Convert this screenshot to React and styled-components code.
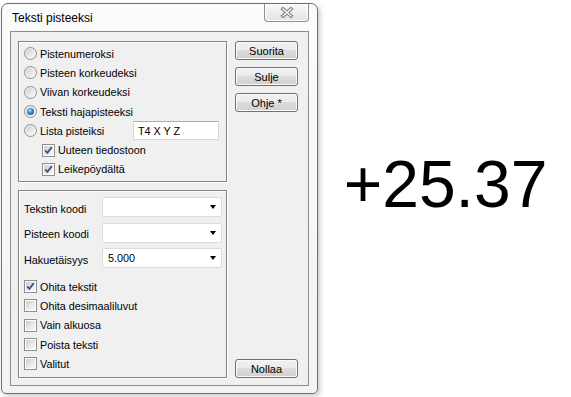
import React from 'react';
import styled, { createGlobalStyle } from 'styled-components';

const GlobalStyle = createGlobalStyle`
    html, body {
        margin: 0;
        padding: 0;
        background: #ffffff;
    }
    * {
        box-sizing: border-box;
    }
`;

const Page = styled.div`
    display: flex;
    align-items: flex-start;
    width: 571px;
    height: 397px;
    font-family: "Liberation Sans", Arial, sans-serif;
    color: #000;
`;

const Window = styled.div`
    margin: 3px 0 0 1px;
    width: 317px;
    height: 391px;
    display: flex;
    flex-direction: column;
    padding: 0 8px 7px;
    border: 1px solid #6f6f6f;
    border-radius: 7px 7px 5px 5px;
    background: linear-gradient(180deg, #fbfbfb 0%, #f3f3f3 100%);
    box-shadow: 2px 2px 5px rgba(0, 0, 0, 0.22);
`;

const TitleBar = styled.div`
    height: 27px;
    display: flex;
    align-items: center;
    justify-content: space-between;
`;

const Title = styled.span`
    padding-left: 2px;
    font-size: 12px;
`;

const CloseButton = styled.div`
    align-self: flex-start;
    width: 45px;
    height: 18px;
    display: flex;
    align-items: center;
    justify-content: center;
    border: 1px solid #8f8f8f;
    border-top: none;
    border-radius: 0 0 4px 4px;
    background: linear-gradient(180deg, #f7f7f7 0%, #eeeeee 50%, #e3e3e3 100%);
    box-shadow: inset 0 0 0 1px #ffffff;
`;

const Client = styled.div`
    flex: 1;
    display: flex;
    gap: 8px;
    padding: 9px 10px 7px 7px;
    border: 1px solid #8d8d8d;
    background: #f0f0f0;
    font-size: 10.8px;
`;

const LeftColumn = styled.div`
    width: 209px;
    display: flex;
    flex-direction: column;
    gap: 8px;
`;

const GroupBox = styled.div`
    flex: ${p => (p.$height ? 'none' : '1')};
    height: ${p => (p.$height ? `${p.$height}px` : 'auto')};
    display: flex;
    flex-direction: column;
    padding: ${p => p.$padding};
    border: 1px solid #858585;
    box-shadow: inset 1px 1px 0 #ffffff, 1px 1px 0 #ffffff;
`;

const OptionRow = styled.div`
    height: 19.3px;
    display: flex;
    align-items: center;
    gap: 3px;
    padding-left: ${p => p.$indent || 5}px;
`;

const Radio = styled.span`
    position: relative;
    flex: none;
    width: 13px;
    height: 13px;
    border-radius: 50%;
    border: 1px solid #8e8f8f;
    background: linear-gradient(135deg, #c9c9c9 0%, #e6e6e6 50%, #fbfbfb 100%);
    box-shadow: inset 0 0 0 1px #f4f4f4;

    &::after {
        content: '';
        display: ${p => (p.$checked ? 'block' : 'none')};
        position: absolute;
        left: 2px;
        top: 2px;
        width: 7px;
        height: 7px;
        border-radius: 50%;
        background: radial-gradient(circle at 40% 35%, #a9e2fb 0%, #2c86c9 45%, #103e6f 100%);
    }
`;

const Check = styled.span`
    position: relative;
    flex: none;
    width: 13px;
    height: 13px;
    border: 1px solid #8e8f8f;
    background: #ffffff;

    &::before {
        content: '';
        position: absolute;
        inset: 1px;
        background: linear-gradient(135deg, #cdcdcd 0%, #e9e9e9 55%, #f9f9f9 100%);
    }

    svg {
        position: absolute;
        left: 0;
        top: 0;
    }
`;

const TextField = styled.div`
    margin-left: auto;
    margin-right: 7px;
    width: 86px;
    height: 19px;
    display: flex;
    align-items: center;
    padding-left: 4px;
    border: 1px solid #d4d6da;
    border-top-color: #abadb3;
    background: #ffffff;
`;

const FieldList = styled.div`
    display: flex;
    flex-direction: column;
    gap: 5.5px;
    padding-left: 5px;
`;

const FieldRow = styled.div`
    height: 20px;
    display: flex;
    align-items: center;
`;

const FieldLabel = styled.span`
    width: 78px;
    padding-top: 3px;
`;

const Combo = styled.div`
    width: 120px;
    height: 20px;
    display: flex;
    align-items: center;
    justify-content: space-between;
    padding: 0 5px 0 5px;
    border: 1px solid #dcdcdc;
    border-radius: 2px;
    background: #ffffff;
`;

const Arrow = styled.span`
    width: 0;
    height: 0;
    border-left: 3.5px solid transparent;
    border-right: 3.5px solid transparent;
    border-top: 4px solid #000;
`;

const CheckList = styled.div`
    margin-top: 9px;
    display: flex;
    flex-direction: column;
`;

const ButtonColumn = styled.div`
    width: 63px;
    display: flex;
    flex-direction: column;
    justify-content: space-between;
`;

const ButtonStack = styled.div`
    display: flex;
    flex-direction: column;
    gap: 7px;
`;

const Button = styled.div`
    height: 19px;
    display: flex;
    align-items: center;
    justify-content: center;
    border: 1px solid #707070;
    border-radius: 3px;
    background: linear-gradient(180deg, #f2f2f2 0%, #ebebeb 45%, #dddddd 50%, #cfcfcf 100%);
    box-shadow: inset 0 0 0 1px #fbfbfb;
    font-size: 11px;
`;

const Readout = styled.div`
    flex: 1;
    height: 100%;
    display: flex;
    align-items: center;
    justify-content: center;
    padding: 0 0 30px 2px;
    font-size: 66px;
`;

const CheckBox = ({checked}) => (
    <Check>
        {checked && (
            <svg width="11" height="11" viewBox="0 0 11 11">
                <path d="M2.2 5.4 L4.4 7.8 L8.8 2.2" fill="none" stroke="#3a5593" strokeWidth="1.9"/>
            </svg>
        )}
    </Check>
);

const radios = [
    {label: 'Pistenumeroksi'},
    {label: 'Pisteen korkeudeksi'},
    {label: 'Viivan korkeudeksi'},
    {label: 'Teksti hajapisteeksi', checked: true},
];

const fields = [
    {label: 'Tekstin koodi', value: ''},
    {label: 'Pisteen koodi', value: ''},
    {label: 'Hakuetäisyys', value: '5.000'},
];

const options = [
    {label: 'Ohita tekstit', checked: true},
    {label: 'Ohita desimaaliluvut'},
    {label: 'Vain alkuosa'},
    {label: 'Poista teksti'},
    {label: 'Valitut'},
];

const App = () => {
    return (
        <Page>
            <GlobalStyle/>
            <Window>
                <TitleBar>
                    <Title>Teksti pisteeksi</Title>
                    <CloseButton>
                        <svg width="14" height="11" viewBox="0 0 14 11">
                            <path d="M3 2 L11 9 M11 2 L3 9" stroke="#7a7a7a" strokeWidth="3.6" strokeLinecap="square"/>
                            <path d="M3 2 L11 9 M11 2 L3 9" stroke="#ffffff" strokeWidth="1.5" strokeLinecap="square"/>
                        </svg>
                    </CloseButton>
                </TitleBar>

                <Client>
                    <LeftColumn>
                        <GroupBox $height={141} $padding="2px 0 0 0">
                            {radios.map(r => (
                                <OptionRow key={r.label}>
                                    <Radio $checked={r.checked}/>
                                    <span>{r.label}</span>
                                </OptionRow>
                            ))}
                            <OptionRow>
                                <Radio/>
                                <span>Lista pisteiksi</span>
                                <TextField>T4 X Y Z</TextField>
                            </OptionRow>
                            <OptionRow $indent={23}>
                                <CheckBox checked/>
                                <span>Uuteen tiedostoon</span>
                            </OptionRow>
                            <OptionRow $indent={23}>
                                <CheckBox checked/>
                                <span>Leikepöydältä</span>
                            </OptionRow>
                        </GroupBox>

                        <GroupBox $padding="6px 0 0 0">
                            <FieldList>
                                {fields.map(f => (
                                    <FieldRow key={f.label}>
                                        <FieldLabel>{f.label}</FieldLabel>
                                        <Combo>
                                            <span>{f.value}</span>
                                            <Arrow/>
                                        </Combo>
                                    </FieldRow>
                                ))}
                            </FieldList>
                            <CheckList>
                                {options.map(o => (
                                    <OptionRow key={o.label}>
                                        <CheckBox checked={o.checked}/>
                                        <span>{o.label}</span>
                                    </OptionRow>
                                ))}
                            </CheckList>
                        </GroupBox>
                    </LeftColumn>

                    <ButtonColumn>
                        <ButtonStack>
                            <Button>Suorita</Button>
                            <Button>Sulje</Button>
                            <Button>Ohje *</Button>
                        </ButtonStack>
                        <Button>Nollaa</Button>
                    </ButtonColumn>
                </Client>
            </Window>

            <Readout>+25.37</Readout>
        </Page>
    );
};

export default App;
